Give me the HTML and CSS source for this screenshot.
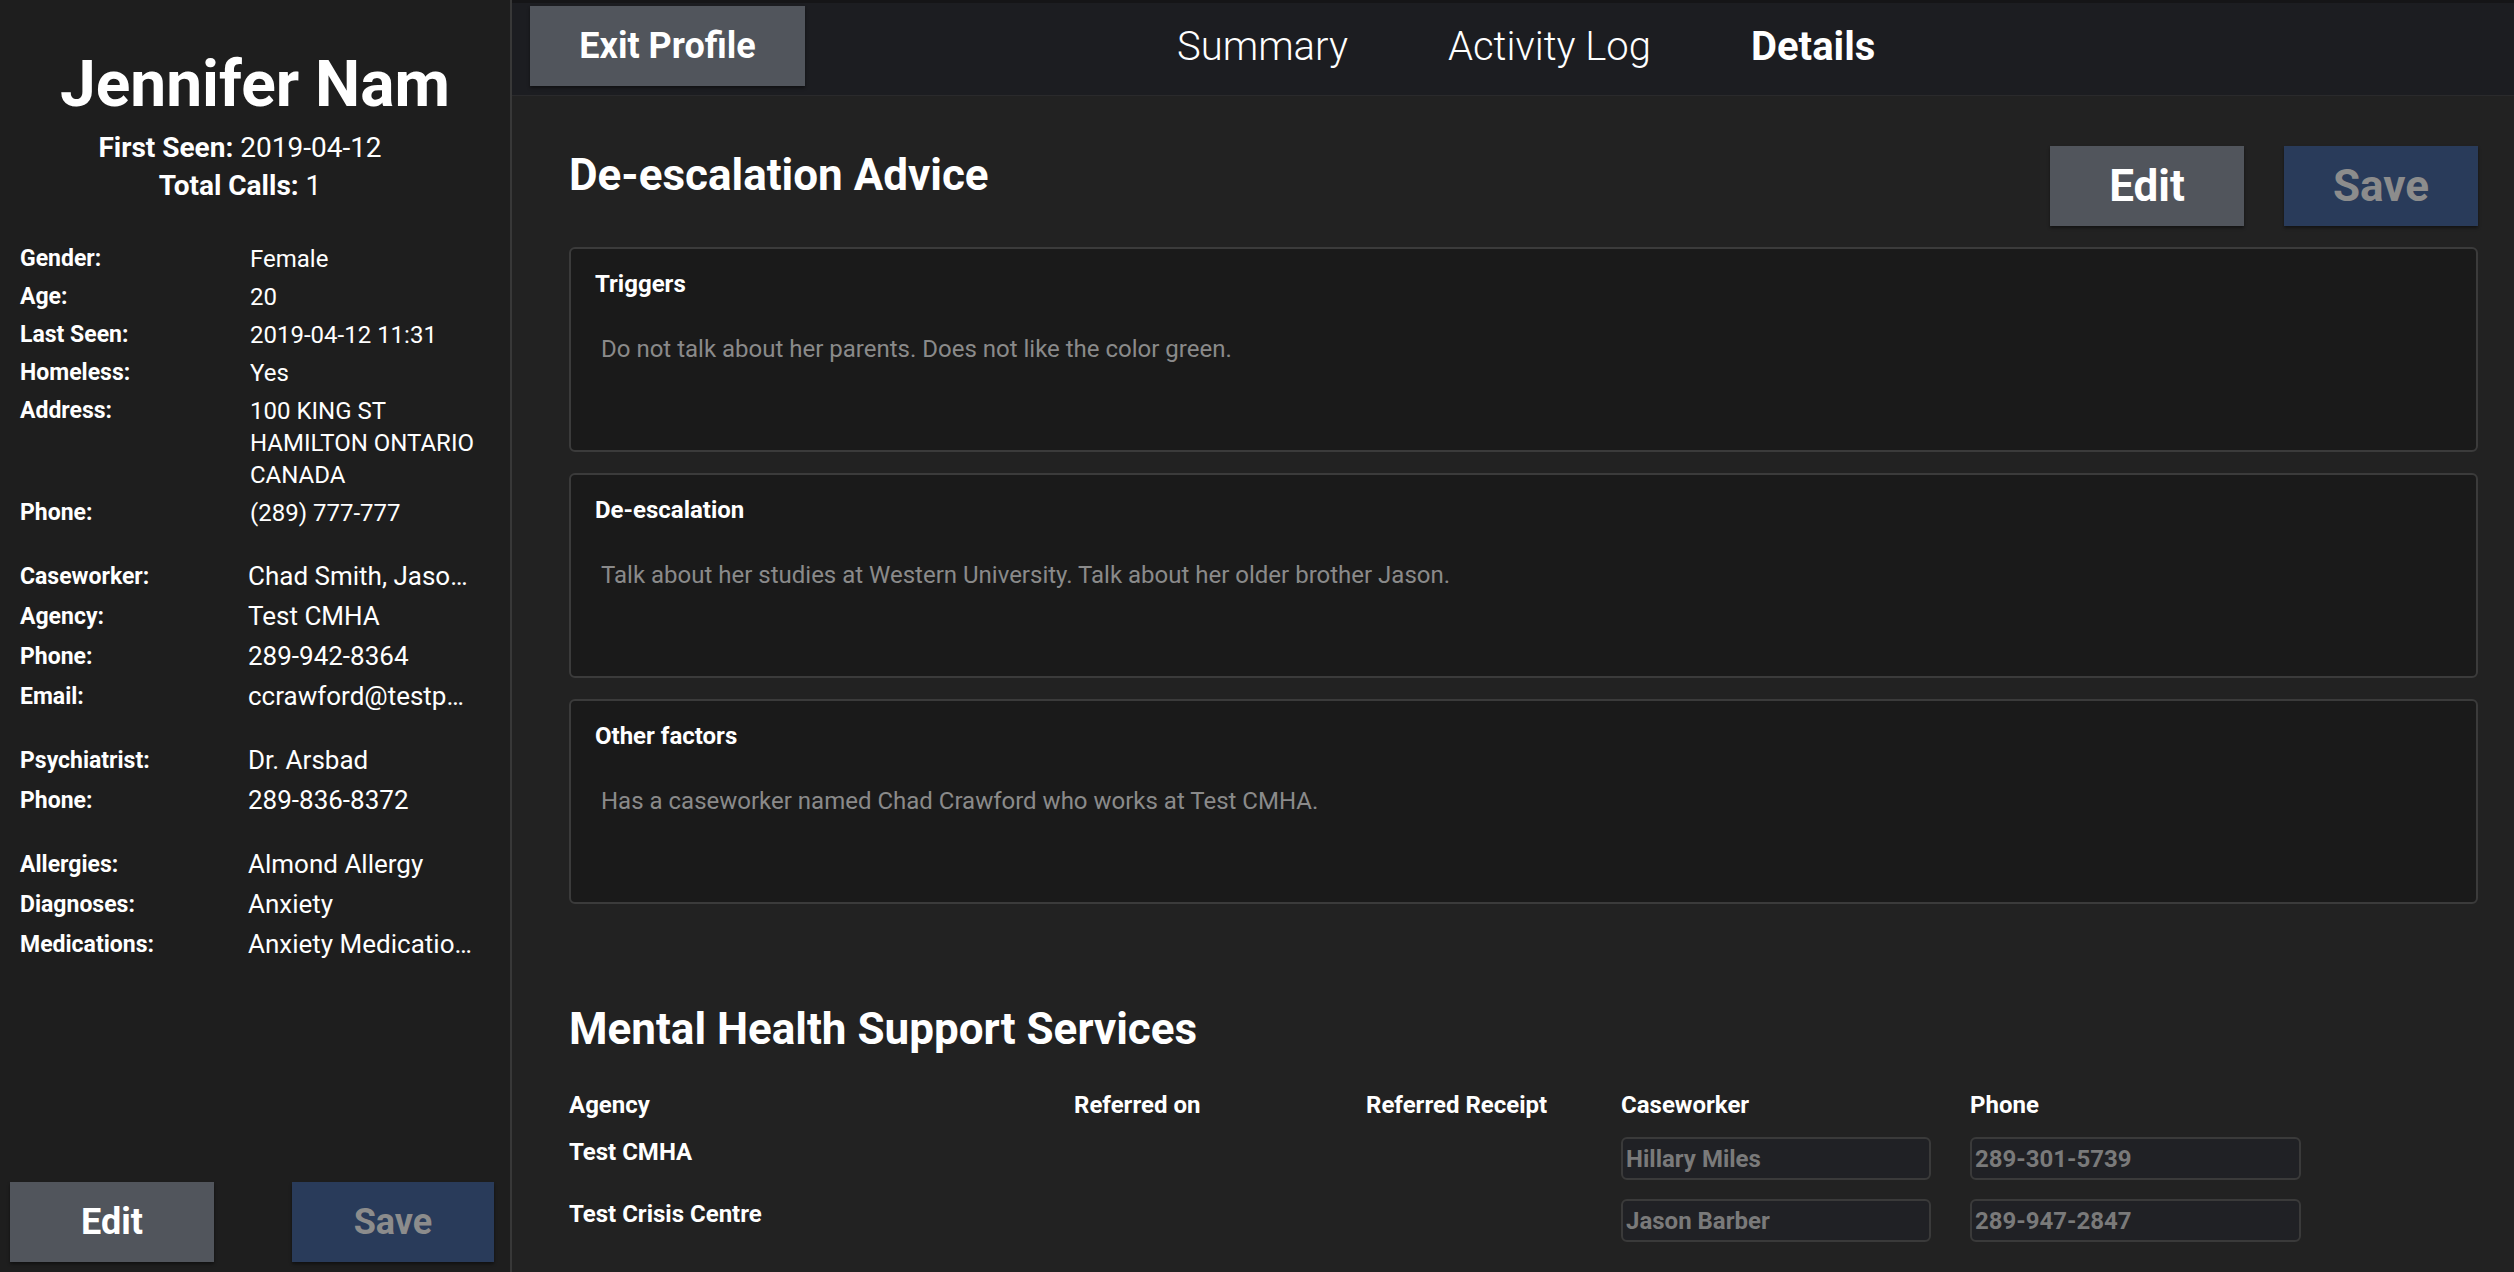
FILE: index.html
```html
<!DOCTYPE html>
<html lang="en">
<head>
<meta charset="utf-8">
<title>Jennifer Nam - Details</title>
<link rel="stylesheet" href="styles.css">
</head>
<body>
<div class="app">
  <aside class="sidebar">
    <div class="profile-head">
      <h1 class="name">Jennifer Nam</h1>
      <p class="meta meta-first"><b>First Seen:</b> 2019-04-12</p>
      <p class="meta"><b>Total Calls:</b> 1</p>
    </div>

    <dl class="facts facts-basic">
      <dt>Gender:</dt><dd>Female</dd>
      <dt>Age:</dt><dd>20</dd>
      <dt>Last Seen:</dt><dd>2019-04-12 11:31</dd>
      <dt>Homeless:</dt><dd>Yes</dd>
      <dt>Address:</dt><dd class="multi">100 KING ST<br>HAMILTON ONTARIO<br>CANADA</dd>
      <dt>Phone:</dt><dd>(289) 777-777</dd>
    </dl>

    <dl class="facts facts-lg">
      <dt>Caseworker:</dt><dd>Chad Smith, Jason Barber</dd>
      <dt>Agency:</dt><dd>Test CMHA</dd>
      <dt>Phone:</dt><dd>289-942-8364</dd>
      <dt>Email:</dt><dd>ccrawford@testpolice.ca</dd>
    </dl>

    <dl class="facts facts-lg">
      <dt>Psychiatrist:</dt><dd>Dr. Arsbad</dd>
      <dt>Phone:</dt><dd>289-836-8372</dd>
    </dl>

    <dl class="facts facts-lg">
      <dt>Allergies:</dt><dd>Almond Allergy</dd>
      <dt>Diagnoses:</dt><dd>Anxiety</dd>
      <dt>Medications:</dt><dd>Anxiety Medications</dd>
    </dl>

    <div class="side-actions">
      <button class="btn btn-edit btn-side-edit">Edit</button>
      <button class="btn btn-save btn-side-save">Save</button>
    </div>
  </aside>

  <main class="main">
    <nav class="topnav">
      <button class="btn btn-edit btn-exit">Exit Profile</button>
      <div class="tabs">
        <span class="tab">Summary</span>
        <span class="tab">Activity Log</span>
        <span class="tab tab-active">Details</span>
      </div>
    </nav>

    <div class="content">
      <section class="advice">
        <div class="section-head">
          <h2 class="section-title">De-escalation Advice</h2>
          <div class="head-actions">
            <button class="btn btn-edit btn-lg">Edit</button>
            <button class="btn btn-save btn-lg">Save</button>
          </div>
        </div>

        <div class="card">
          <div class="card-label">Triggers</div>
          <div class="card-body">Do not talk about her parents. Does not like the color green.</div>
        </div>
        <div class="card">
          <div class="card-label">De-escalation</div>
          <div class="card-body">Talk about her studies at Western University. Talk about her older brother Jason.</div>
        </div>
        <div class="card">
          <div class="card-label">Other factors</div>
          <div class="card-body">Has a caseworker named Chad Crawford who works at Test CMHA.</div>
        </div>
      </section>

      <section class="services">
        <h2 class="section-title">Mental Health Support Services</h2>
        <div class="svc-table">
          <div class="th">Agency</div>
          <div class="th">Referred on</div>
          <div class="th">Referred Receipt</div>
          <div class="th">Caseworker</div>
          <div class="th">Phone</div>

          <div class="td agency">Test CMHA</div>
          <div class="td"></div>
          <div class="td"></div>
          <div class="td"><div class="field field-worker">Hillary Miles</div></div>
          <div class="td"><div class="field field-phone">289-301-5739</div></div>

          <div class="td agency">Test Crisis Centre</div>
          <div class="td"></div>
          <div class="td"></div>
          <div class="td"><div class="field field-worker">Jason Barber</div></div>
          <div class="td"><div class="field field-phone">289-947-2847</div></div>
        </div>
      </section>
    </div>
  </main>
</div>
</body>
</html>
```

FILE: styles.css
```css
* { box-sizing: border-box; }

html, body {
  margin: 0;
  padding: 0;
  height: 100%;
  overflow: hidden;
  background: #222222;
  font-family: Roboto, "Noto Sans", "Liberation Sans", sans-serif;
  color: #ffffff;
}

.app {
  display: flex;
  height: 1272px;
}

/* ---------- Sidebar ---------- */
.sidebar {
  width: 512px;
  flex: 0 0 512px;
  height: 100%;
  background: #1e1e1e;
  border-right: 2px solid #383838;
  display: flex;
  flex-direction: column;
  overflow: hidden;
}

.profile-head {
  text-align: center;
  padding-top: 47px;
}

.name {
  margin: 0;
  font-size: 64px;
  line-height: 76px;
  font-weight: 700;
}

.meta {
  margin: 0;
  padding-right: 30px;
  font-size: 28px;
  line-height: 38px;
  font-weight: 400;
}
.meta b { font-weight: 700; }
.meta-first { margin-top: 6px; }

.facts {
  margin: 31px 0 0;
  padding: 0 36px 0 20px;
  display: grid;
  grid-template-columns: 228px minmax(0, 1fr);
  row-gap: 7px;
  align-items: start;
}

.facts-basic {
  margin-top: 38px;
  row-gap: 6px;
  grid-template-columns: 230px minmax(0, 1fr);
}

.facts dt {
  font-size: 23px;
  line-height: 32px;
  font-weight: 700;
}

.facts dd {
  margin: 0;
  font-size: 24px;
  line-height: 32px;
  white-space: nowrap;
  overflow: hidden;
  text-overflow: ellipsis;
}

.facts dd.multi { white-space: normal; }

.facts-lg dt { line-height: 33px; }
.facts-lg dd { font-size: 26px; line-height: 33px; }

.side-actions {
  margin-top: auto;
  display: flex;
  justify-content: space-between;
  padding: 0 16px 10px 10px;
}

/* ---------- Buttons ---------- */
.btn {
  border: none;
  border-radius: 0;
  height: 80px;
  font-family: Roboto, "Noto Sans", "Liberation Sans", sans-serif;
  font-weight: 700;
  font-size: 36px;
  color: #ffffff;
  box-shadow: 0 2px 3px rgba(0, 0, 0, 0.45);
  cursor: pointer;
  padding: 0;
}

.btn-edit { background: #51555c; color: #ffffff; }
.btn-save { background: #293b5a; color: #8c8c8c; }

.btn-side-edit { width: 204px; }
.btn-side-save { width: 202px; }

.btn-lg { width: 194px; font-size: 44px; }

.btn-exit {
  width: 275px;
  font-size: 36px;
}

/* ---------- Main ---------- */
.main {
  flex: 1;
  display: flex;
  flex-direction: column;
  min-width: 0;
  background: #222222;
}

.topnav {
  height: 96px;
  flex: 0 0 96px;
  background: #1c1d21;
  box-shadow: inset 0 3px 0 #151517;
  border-bottom: 1px solid #2a2a2c;
  display: flex;
  align-items: center;
  padding: 6px 0 9px 18px;
}

.tabs {
  display: flex;
  margin-left: 322px;
}

.tab {
  padding: 0 50px;
  font-size: 40px;
  font-weight: 300;
  color: #ffffff;
}

.tab-active { font-weight: 700; }

.content {
  padding: 50px 36px 0 57px;
}

.section-head {
  display: flex;
  justify-content: space-between;
  align-items: flex-start;
}

.section-title {
  margin: 4px 0 0;
  font-size: 44px;
  line-height: 50px;
  font-weight: 700;
}

.head-actions {
  display: flex;
  gap: 40px;
}

.card {
  margin-top: 21px;
  height: 205px;
  background: #1a1a1a;
  border: 2px solid #3b3b3b;
  border-radius: 6px;
  padding: 20px 24px 0;
}

.card-label {
  font-size: 24px;
  line-height: 30px;
  font-weight: 700;
}

.card-body {
  margin-top: 35px;
  padding-left: 6px;
  font-size: 24px;
  line-height: 30px;
  color: #8a8a8a;
}

.services {
  margin-top: 100px;
}

.services .section-title { margin-top: 0; }

.svc-table {
  margin-top: 36px;
  display: grid;
  grid-template-columns: 505px 292px 255px 349px 1fr;
  row-gap: 19px;
  align-items: start;
}

.th {
  margin-bottom: -2px;
}

.th, .td.agency {
  font-size: 24px;
  line-height: 30px;
  font-weight: 700;
}

.field {
  height: 43px;
  background: #202125;
  border: 2px solid #3a3a3a;
  border-radius: 6px;
  padding: 0 3px;
  display: flex;
  align-items: center;
  font-size: 24px;
  font-weight: 700;
  color: #7a7a7a;
}

.field-worker { width: 310px; }
.field-phone { width: 331px; }
```
